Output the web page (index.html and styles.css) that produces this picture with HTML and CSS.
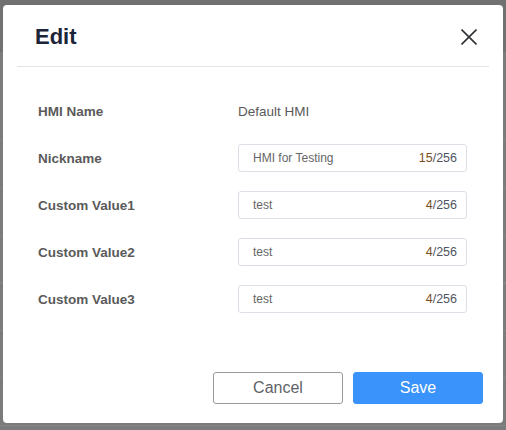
FILE: index.html
```html
<!DOCTYPE html>
<html>
<head>
<meta charset="utf-8">
<link rel="stylesheet" href="styles.css">
</head>
<body>
<div class="backdrop">
  <div class="modal">
    <div class="modal-header">
      <h1 class="title">Edit</h1>
      <button class="close" aria-label="Close">
        <svg width="16" height="16" viewBox="0 0 16 16"><path d="M0.5 0.5 L15.5 15.5 M15.5 0.5 L0.5 15.5" stroke="#303133" stroke-width="1.6" fill="none"/></svg>
      </button>
    </div>
    <div class="modal-body">
      <div class="row">
        <div class="label">HMI Name</div>
        <div class="value">Default HMI</div>
      </div>
      <div class="row">
        <div class="label">Nickname</div>
        <div class="input"><span class="input-text">HMI for Testing</span><span class="count"><span class="count-cur">15</span>/256</span></div>
      </div>
      <div class="row">
        <div class="label">Custom Value1</div>
        <div class="input"><span class="input-text">test</span><span class="count"><span class="count-cur">4</span>/256</span></div>
      </div>
      <div class="row">
        <div class="label">Custom Value2</div>
        <div class="input"><span class="input-text">test</span><span class="count"><span class="count-cur">4</span>/256</span></div>
      </div>
      <div class="row">
        <div class="label">Custom Value3</div>
        <div class="input"><span class="input-text">test</span><span class="count"><span class="count-cur">4</span>/256</span></div>
      </div>
    </div>
    <div class="modal-footer">
      <button class="btn btn-cancel">Cancel</button>
      <button class="btn btn-save">Save</button>
    </div>
  </div>
</div>
</body>
</html>
```
FILE: styles.css
```css
* { box-sizing: border-box; }
html, body { margin: 0; padding: 0; }
body {
  font-family: "Liberation Sans", Arial, sans-serif;
  background: #7b7b7b;
  width: 506px;
  height: 430px;
  overflow: hidden;
}
.backdrop {
  height: 430px;
  padding: 5px 3px 0 3px;
  background:
    linear-gradient(#717171, #717171) 0 0 / 100% 52px no-repeat,
    repeating-linear-gradient(to bottom, #858585 0, #858585 1px, transparent 1px, transparent 47.5px) 0 140px / 100% 300px no-repeat,
    #7b7b7b;
}
.modal {
  width: 500px;
  height: 418px;
  background: #fff;
  border-radius: 4px;
  display: flex;
  flex-direction: column;
}
.modal-header {
  height: 62px;
  margin: 0 14px;
  padding: 2px 12px 0 18px;
  border-bottom: 1px solid #e4e4e4;
  display: flex;
  align-items: center;
  justify-content: space-between;
}
.title {
  margin: 0;
  font-size: 22px;
  font-weight: bold;
  color: #1c2438;
}
.close {
  border: 0;
  background: none;
  padding: 0;
  width: 16px;
  height: 16px;
  display: flex;
}
.modal-body {
  padding: 30px 0 0 35px;
  display: flex;
  flex-direction: column;
  gap: 19px;
}
.row {
  height: 28px;
  display: flex;
  align-items: center;
}
.label {
  width: 200px;
  font-size: 13.5px;
  font-weight: bold;
  color: #5a5a5a;
}
.value {
  font-size: 13.5px;
  color: #5a5a5a;
}
.input {
  width: 229px;
  height: 28px;
  border: 1px solid #dcdfe6;
  border-radius: 3px;
  display: flex;
  align-items: center;
  justify-content: space-between;
  padding: 0 9px 0 14px;
  font-size: 12.5px;
}
.input-text { color: #666; font-size: 12px; }
.count { color: #4f5563; }
.count-cur { color: #7a4f22; }
.modal-footer {
  margin-top: auto;
  padding: 0 20px 19px 0;
  display: flex;
  justify-content: flex-end;
  gap: 10px;
}
.btn {
  width: 130px;
  height: 32px;
  border-radius: 3px;
  font-family: "Liberation Sans", Arial, sans-serif;
  font-size: 16px;
  cursor: pointer;
}
.btn-cancel {
  background: #fff;
  border: 1px solid #9a9a9a;
  color: #606266;
}
.btn-save {
  background: #3a93fb;
  border: 1px solid #3a93fb;
  color: #fff;
}
```
